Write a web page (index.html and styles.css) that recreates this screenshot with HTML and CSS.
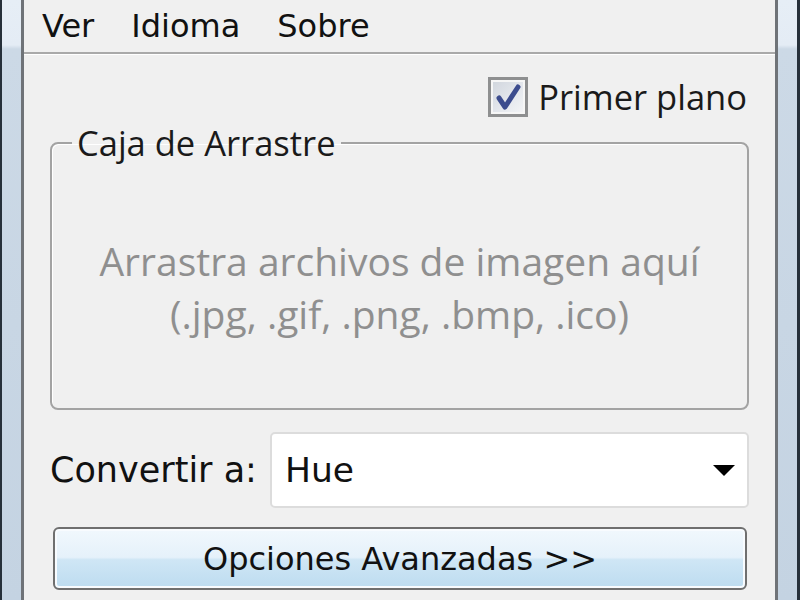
FILE: index.html
```html
<!DOCTYPE html>
<html lang="es">
<head>
<meta charset="utf-8">
<title>Convertidor</title>
<link rel="stylesheet" href="styles.css">
</head>
<body>
<div class="window">
  <div class="frame frame-left"></div>
  <div class="client">
    <nav class="menubar">
      <span class="menu-item">Ver</span>
      <span class="menu-item">Idioma</span>
      <span class="menu-item">Sobre</span>
    </nav>
    <main class="content">
      <div class="topmost-row">
        <label class="checkbox">
          <span class="check-box">
            <svg viewBox="0 0 34 34" width="34" height="34">
              <path d="M8 18 L14 27 L27 7" fill="none" stroke="#3c4c8e" stroke-width="5" stroke-linecap="round" stroke-linejoin="round"/>
            </svg>
          </span>
          <span class="check-label">Primer plano</span>
        </label>
      </div>
      <fieldset class="groupbox">
        <legend class="group-title">Caja de Arrastre</legend>
        <div class="drop-area">
          <div>Arrastra archivos de imagen aquí</div>
          <div>(.jpg, .gif, .png, .bmp, .ico)</div>
        </div>
      </fieldset>
      <div class="convert-row">
        <span class="convert-label">Convertir a:</span>
        <div class="combo">
          <span class="combo-value">Hue</span>
          <span class="combo-arrow"></span>
        </div>
      </div>
      <button class="advanced-btn" type="button">Opciones Avanzadas &gt;&gt;</button>
    </main>
  </div>
  <div class="frame frame-right"></div>
</div>
</body>
</html>
```

FILE: styles.css
```css
html, body {
  margin: 0;
  padding: 0;
  width: 800px;
  height: 600px;
  overflow: hidden;
  background: #f0f0f0;
}

.window {
  display: flex;
  width: 800px;
  height: 600px;
}

.frame {
  flex: none;
  height: 100%;
  background: linear-gradient(to bottom, #e6eef6 0, #e4ecf5 45px, #ccd9e6 49px, #c4d3e2 100%);
}

.frame-left {
  width: 19px;
  border-left: 2px solid #26303a;
  border-right: 3px solid #6f7378;
}

.frame-right {
  width: 19px;
  border-left: 3px solid #6f7378;
  border-right: 3px solid #26303a;
}

.client {
  flex: 1;
  display: flex;
  flex-direction: column;
  background: #f0f0f0;
  min-width: 0;
}

.menubar {
  height: 52px;
  display: flex;
  align-items: center;
  padding-left: 18px;
  border-bottom: 2px solid #a9a9a9;
  box-shadow: 0 1px 0 #ffffff;
  font-family: "DejaVu Sans", sans-serif;
  font-size: 32px;
  color: #111;
}

.menu-item {
  margin-right: 37px;
  line-height: 1;
}

.content {
  flex: 1;
  display: flex;
  flex-direction: column;
  padding: 23px 26px 0 26px;
}

.topmost-row {
  display: flex;
  justify-content: flex-end;
  padding-right: 2px;
}

.checkbox {
  display: flex;
  align-items: center;
  gap: 10px;
  font-family: "Open Sans", sans-serif;
  font-size: 34.5px;
  color: #1a1a1a;
  height: 40px;
}

.check-box {
  width: 34px;
  height: 34px;
  border: 3px solid #8e8f90;
  background: linear-gradient(135deg, #cfd4dc 0%, #e6e9ee 60%, #f4f5f7 100%);
  box-shadow: inset 0 0 0 2px #f6f6f6;
  display: flex;
  align-items: center;
  justify-content: center;
}

.check-box svg {
  display: block;
}

.check-label {
  line-height: 1;
}

.groupbox {
  margin: 8px 0 0 0;
  padding: 0;
  border: 2px solid #a3a3a3;
  border-radius: 8px;
  box-shadow: inset 1px 1px 0 #ffffff;
}

.group-title {
  margin-left: 20px;
  padding: 0 5px;
  font-family: "Open Sans", sans-serif;
  font-size: 34.5px;
  color: #1a1a1a;
  line-height: 36px;
}

.drop-area {
  box-sizing: border-box;
  height: 247px;
  padding-top: 5px;
  display: flex;
  flex-direction: column;
  justify-content: center;
  align-items: center;
  font-family: "Open Sans", sans-serif;
  font-size: 39px;
  color: #8f8f8f;
  line-height: 53px;
}

.convert-row {
  display: flex;
  align-items: center;
  margin-top: 22px;
  height: 76px;
}

.convert-label {
  font-family: "DejaVu Sans", sans-serif;
  font-size: 35px;
  color: #111;
  width: 220px;
}

.combo {
  flex: 1;
  height: 76px;
  box-sizing: border-box;
  background: #ffffff;
  border: 2px solid #dcdcdc;
  border-radius: 5px;
  display: flex;
  align-items: center;
  padding: 0 12px 0 13px;
}

.combo-value {
  flex: 1;
  font-family: "DejaVu Sans", sans-serif;
  font-size: 34.5px;
  color: #111;
}

.combo-arrow {
  width: 0;
  height: 0;
  border-left: 11px solid transparent;
  border-right: 11px solid transparent;
  border-top: 11px solid #000;
}

.advanced-btn {
  margin: 19px 2px 0 3px;
  height: 63px;
  border: 2px solid #6f6f6f;
  border-radius: 6px;
  box-shadow: inset 0 0 0 2px #f8fbfe;
  background: linear-gradient(to bottom, #f1f8fd 0%, #e5f1fa 48%, #cfe6f5 52%, #bddcf0 100%);
  font-family: "DejaVu Sans", sans-serif;
  font-size: 32px;
  color: #111;
  padding: 0;
}
```
